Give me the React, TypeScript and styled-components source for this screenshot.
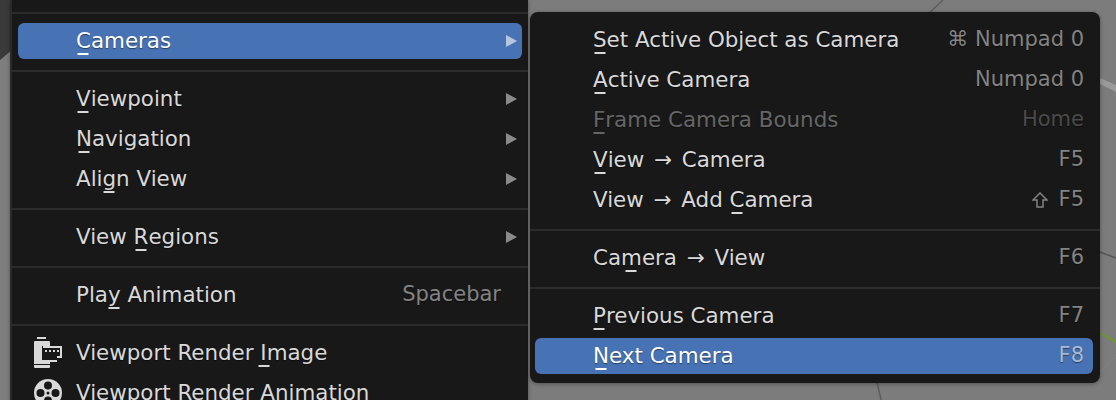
import React from "react";
import styled, { createGlobalStyle } from "styled-components";

const GlobalStyle = createGlobalStyle`
  html, body {
    margin: 0;
    padding: 0;
    background: #7c7c7c;
    overflow: hidden;
  }
`;

const Page = styled.div`
  position: relative;
  display: flex;
  align-items: flex-start;
  width: 1116px;
  height: 400px;
  padding-left: 11px;
  box-sizing: border-box;
  overflow: hidden;
  font-family: "DejaVu Sans", sans-serif;
  font-size: 21.4px;
`;

const Viewport = styled.svg`
  position: absolute;
  inset: 0;
`;

const Panel = styled.div`
  position: relative;
  display: flex;
  flex-direction: column;
  flex: none;
  background: #181818;
  box-shadow: 0 1px 4px rgba(0, 0, 0, 0.35);
`;

const MainMenu = styled(Panel)`
  width: 518px;
  height: 420px;
  padding-top: 12px;
  box-sizing: border-box;
  border-left: 2px solid #2a2a2a;
  margin-left: -1px;
`;

const SubMenu = styled(Panel)`
  width: 570px;
  height: 371px;
  margin-left: 2px;
  margin-top: 12px;
  padding-top: 7px;
  box-sizing: border-box;
  border-radius: 8px;
`;

const Separator = styled.div<{ $first?: boolean }>`
  flex: none;
  height: 2px;
  background: #2c2c2c;
  margin-top: ${({ $first }) => ($first ? 0 : 10)}px;
  margin-bottom: 6px;
`;

const Row = styled.div<{ $active?: boolean; $sub?: boolean }>`
  flex: none;
  position: relative;
  display: flex;
  align-items: center;
  justify-content: space-between;
  height: 36px;
  margin: 3px ${({ $sub }) => ($sub ? "7px" : "6px")} 1px
    ${({ $sub }) => ($sub ? "5px" : "6px")};
  padding: 0 ${({ $sub }) => ($sub ? "9px" : "6px")} 2px 58px;
  box-sizing: border-box;
  border-radius: 6px;
  background: ${({ $active }) => ($active ? "#4772b3" : "transparent")};
`;

const Label = styled.span<{ $active?: boolean; $disabled?: boolean }>`
  color: ${({ $active, $disabled }) =>
    $active ? "#ffffff" : $disabled ? "#666666" : "#d9d9d9"};
  text-shadow: 0 1px 1px rgba(0, 0, 0, 0.45);
  white-space: pre;
`;

const Hint = styled.span<{ $active?: boolean; $disabled?: boolean; $inset?: boolean }>`
  color: ${({ $active, $disabled }) =>
    $active ? "#a9b9d4" : $disabled ? "#4a4a4a" : "#838383"};
  font-size: 21px;
  text-shadow: 0 1px 1px rgba(0, 0, 0, 0.45);
  white-space: pre;
  margin-right: ${({ $inset }) => ($inset ? 15 : 0)}px;
`;

const Key = styled.span`
  position: relative;

  &::after {
    content: "";
    position: absolute;
    left: 50%;
    bottom: -2px;
    width: 11px;
    height: 2px;
    transform: translateX(-50%);
    background: currentColor;
  }
`;

const Sym = styled.span`
  padding: 0 3px;
`;

const Arrow = styled.span<{ $active?: boolean }>`
  width: 0;
  height: 0;
  margin: 2px -1px 0 0;
  border-top: 6px solid transparent;
  border-bottom: 6px solid transparent;
  border-left: 11px solid ${({ $active }) => ($active ? "#b6c6df" : "#8a8a8a")};
`;

const IconSlot = styled.svg`
  position: absolute;
  left: 16px;
  top: 50%;
  transform: translateY(-50%);
`;

const ShiftGlyph = styled.svg`
  display: inline-block;
  vertical-align: -2px;
  margin-right: 11px;
`;

const FilmIcon = () => (
  <IconSlot width="28" height="32" viewBox="0 0 28 32">
    <rect x="3" y="0" width="9" height="2" fill="#d9d9d9" />
    <rect x="0" y="4" width="16" height="27" rx="1" fill="#d9d9d9" />
    <rect x="0" y="27" width="16" height="1" fill="#181818" />
    <path d="M8 9H28V21H23V25H8Z" fill="#181818" />
    <path d="M9 9H28V21H23V19H26V11H9Z" fill="#d9d9d9" />
    <rect x="6" y="11" width="2" height="13" fill="#d9d9d9" />
    <path d="M11 13h2v2h-2zM15 13h2v2h-2zM19 13h2v2h-2zM23 13h2v2h-2z" fill="#d9d9d9" />
    <rect x="10" y="17" width="13" height="7" fill="#181818" />
    <rect x="8" y="23" width="15" height="2" fill="#d9d9d9" />
  </IconSlot>
);

const ReelIcon = () => (
  <IconSlot width="28" height="28" viewBox="0 0 28 28">
    <circle cx="14" cy="14" r="14" fill="#d9d9d9" />
    <circle cx="14" cy="6.5" r="4" fill="#181818" />
    <circle cx="14" cy="21.5" r="4" fill="#181818" />
    <circle cx="6.5" cy="14" r="4" fill="#181818" />
    <circle cx="21.5" cy="14" r="4" fill="#181818" />
    <circle cx="14" cy="14" r="1.5" fill="#181818" />
  </IconSlot>
);

const ShiftIcon = () => (
  <ShiftGlyph width="16" height="16" viewBox="0 0 16 16">
    <path d="M8 1L15 8H11V15H5V8H1Z" fill="none" stroke="#838383" strokeWidth="1.5" />
  </ShiftGlyph>
);

const App = () => {
  return (
    <Page>
      <GlobalStyle />
      <Viewport width="1116" height="400" viewBox="0 0 1116 400">
        <rect width="1116" height="400" fill="#7c7c7c" />
        <path d="M0 0H12V50L0 60Z" fill="#3a3a3a" />
        <rect x="0" y="60" width="12" height="340" fill="#7e7e7e" />
        <path d="M1100 78L1116 85V92L1100 84Z" fill="#9a9a9a" />
        <path d="M1100 252L1116 258" stroke="#555555" strokeWidth="1.5" />
        <path d="M1100 333L1116 342" stroke="#6c9a26" strokeWidth="2" />
        <path d="M1100 372L1116 355" stroke="#848484" strokeWidth="1" />
        <path d="M943 0L926 16" stroke="#5f5f5f" strokeWidth="1.5" />
        <path d="M877 382L881 400" stroke="#5c5c5c" strokeWidth="1.5" />
      </Viewport>

      <MainMenu>
        <Separator $first />
        <Row $active>
          <Label $active>
            <Key>C</Key>ameras
          </Label>
          <Arrow $active />
        </Row>
        <Separator />
        <Row>
          <Label>
            <Key>V</Key>iewpoint
          </Label>
          <Arrow />
        </Row>
        <Row>
          <Label>
            <Key>N</Key>avigation
          </Label>
          <Arrow />
        </Row>
        <Row>
          <Label>
            Ali<Key>g</Key>n View
          </Label>
          <Arrow />
        </Row>
        <Separator />
        <Row>
          <Label>
            View <Key>R</Key>egions
          </Label>
          <Arrow />
        </Row>
        <Separator />
        <Row>
          <Label>
            Pla<Key>y</Key> Animation
          </Label>
          <Hint $inset>Spacebar</Hint>
        </Row>
        <Separator />
        <Row>
          <FilmIcon />
          <Label>
            Viewport Render <Key>I</Key>mage
          </Label>
        </Row>
        <Row>
          <ReelIcon />
          <Label>Viewport Render Animation</Label>
        </Row>
      </MainMenu>

      <SubMenu>
        <Row $sub>
          <Label>
            <Key>S</Key>et Active Object as Camera
          </Label>
          <Hint>⌘ Numpad 0</Hint>
        </Row>
        <Row $sub>
          <Label>
            <Key>A</Key>ctive Camera
          </Label>
          <Hint>Numpad 0</Hint>
        </Row>
        <Row $sub>
          <Label $disabled>
            <Key>F</Key>rame Camera Bounds
          </Label>
          <Hint $disabled>Home</Hint>
        </Row>
        <Row $sub>
          <Label>
            <Key>V</Key>iew <Sym>→</Sym> Camera
          </Label>
          <Hint>F5</Hint>
        </Row>
        <Row $sub>
          <Label>
            View <Sym>→</Sym> Add <Key>C</Key>amera
          </Label>
          <Hint>
            <ShiftIcon />F5
          </Hint>
        </Row>
        <Separator />
        <Row $sub>
          <Label>
            Ca<Key>m</Key>era <Sym>→</Sym> View
          </Label>
          <Hint>F6</Hint>
        </Row>
        <Separator />
        <Row $sub>
          <Label>
            <Key>P</Key>revious Camera
          </Label>
          <Hint>F7</Hint>
        </Row>
        <Row $sub $active>
          <Label $active>
            <Key>N</Key>ext Camera
          </Label>
          <Hint $active>F8</Hint>
        </Row>
      </SubMenu>
    </Page>
  );
};

export default App;
